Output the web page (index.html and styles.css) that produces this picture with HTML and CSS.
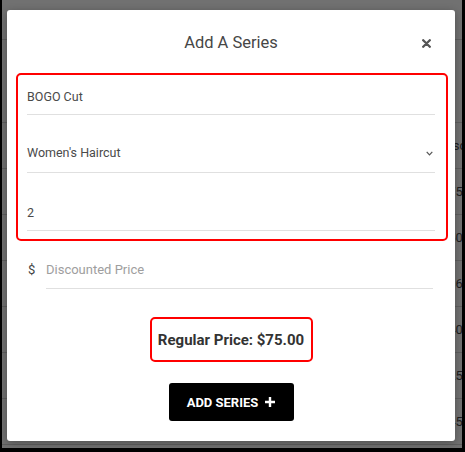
FILE: index.html
```html
<!DOCTYPE html>
<html lang="en">
<head>
    <meta charset="UTF-8">
    <meta name="viewport" content="width=device-width, initial-scale=1.0">
    <title>Series</title>
    <link rel="stylesheet" href="styles.css">
</head>
<body>
    <div class="screen">
        <!-- price list under the dimmed overlay -->
        <div class="backdrop">
            <div class="bg-top"></div>
            <div class="bg-bar"></div>
            <div class="bg-row"><span></span><span>Discount</span></div>
            <div class="bg-row"><span></span><span>$75.00</span></div>
            <div class="bg-row"><span></span><span>$50.00</span></div>
            <div class="bg-row"><span></span><span>$36.00</span></div>
            <div class="bg-row"><span></span><span>$40.00</span></div>
            <div class="bg-row"><span></span><span>$25.00</span></div>
            <div class="bg-row"><span></span><span>$45.00</span></div>
        </div>

        <div class="modal">
            <div class="modal-head">
                <span></span>
                <h2 class="modal-title">Add A Series</h2>
                <button class="close-btn" aria-label="Close">
                    <svg width="9" height="9" viewBox="0 0 9 9"><path d="M1.2 1.2 L7.8 7.8 M7.8 1.2 L1.2 7.8" stroke="#555" stroke-width="2.3" stroke-linecap="round"/></svg>
                </button>
            </div>

            <div class="series-box">
                <div class="field">BOGO Cut</div>
                <div class="field field-select">
                    <span class="grow">Women's Haircut</span>
                    <svg width="7" height="5" viewBox="0 0 7 5"><path d="M0.7 0.8 L3.5 3.8 L6.3 0.8" fill="none" stroke="#555" stroke-width="1.2"/></svg>
                </div>
                <div class="field field-qty">2</div>
            </div>

            <div class="price-row">
                <span class="currency">$</span>
                <span class="price-input">Discounted Price</span>
            </div>

            <div class="regular-price">Regular Price: $75.00</div>

            <button class="add-btn">
                ADD SERIES
                <svg width="10" height="10" viewBox="0 0 10 10"><path d="M5 0 V10 M0 5 H10" stroke="#fff" stroke-width="2.4"/></svg>
            </button>
        </div>
    </div>
</body>
</html>
```

FILE: styles.css
```css
* {
    box-sizing: border-box;
}

body {
    margin: 0;
    font-family: 'Roboto', 'Liberation Sans', sans-serif;
    background: #000;
}

.screen {
    position: relative;
    width: 465px;
    height: 452px;
    border-left: 2px solid #000;
    border-right: 3px solid #000;
    border-bottom: 4px solid #000;
    background-color: #717171;
    overflow: hidden;
}

/* table behind the overlay */
.backdrop {
    color: #1e1e1e;
    font-size: 13px;
}

.bg-top {
    height: 40px;
    border-bottom: 1px solid #5f5f5f;
}

.bg-bar {
    height: 83px;
    border-bottom: 1px solid #5f5f5f;
}

.bg-row {
    display: grid;
    grid-template-columns: 439px 1fr;
    align-items: center;
    height: 46px;
    border-bottom: 1px solid #5f5f5f;
    white-space: nowrap;
}

/* dialog */
.modal {
    position: absolute;
    top: 10px;
    left: 5px;
    width: 448px;
    padding: 0 8px 20px;
    background-color: #fff;
    border-radius: 3px;
    box-shadow: 0 2px 8px rgba(0, 0, 0, 0.3);
}

.modal-head {
    display: grid;
    grid-template-columns: 1fr auto 1fr;
    align-items: center;
    padding: 23px 0 20px;
}

.modal-title {
    margin: 0;
    font-size: 16.5px;
    font-weight: 400;
    line-height: 20px;
    color: #464646;
}

.close-btn {
    justify-self: end;
    margin-right: 16px;
    padding: 0;
    border: none;
    background: none;
    display: flex;
}

.series-box {
    margin: 0 -1px 0 1px;
    border: 2px solid #f00;
    border-radius: 5px;
    padding: 14px 11px 8px 9px;
}

.field {
    display: flex;
    align-items: center;
    font-size: 12.5px;
    line-height: 16px;
    color: #4a4a4a;
    padding-bottom: 9px;
    border-bottom: 1px solid #e0e0e0;
}

.field + .field {
    margin-top: 30px;
}

.field-select {
    padding-bottom: 11px;
}

.field-select svg {
    margin-right: 2px;
}

.field.field-qty {
    margin-top: 32px;
}

.grow {
    flex: 1;
}

.price-row {
    display: flex;
    margin: 21px 14px 0 13px;
    font-size: 13px;
    line-height: 16px;
}

.currency {
    width: 18px;
    color: #444;
}

.price-input {
    flex: 1;
    color: #9e9e9e;
    padding-bottom: 10px;
    border-bottom: 1px solid #e0e0e0;
}

.regular-price {
    width: 163px;
    height: 45px;
    margin: 28px auto 0;
    border: 2px solid #f00;
    border-radius: 5px;
    display: flex;
    align-items: center;
    justify-content: center;
    font-size: 15px;
    font-weight: 700;
    color: #333;
    white-space: nowrap;
}

.add-btn {
    display: flex;
    align-items: center;
    justify-content: center;
    gap: 7px;
    width: 125px;
    height: 38px;
    margin: 21px auto 0;
    border: none;
    border-radius: 3px;
    background-color: #000;
    color: #fff;
    font-family: inherit;
    font-size: 13px;
    font-weight: 700;
}
```
